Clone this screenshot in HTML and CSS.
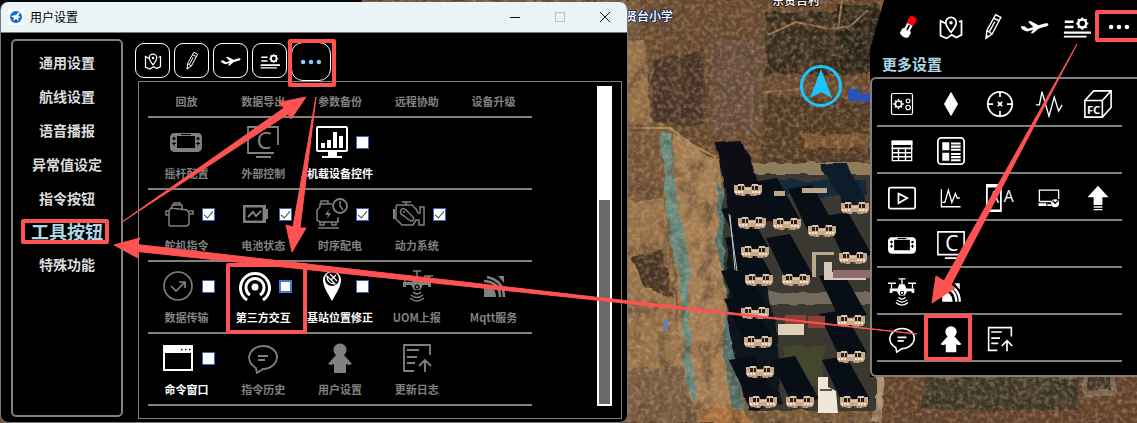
FILE: index.html
```html
<!DOCTYPE html>
<html lang="zh-CN">
<head>
    <meta charset="UTF-8">
    <meta name="viewport" content="width=device-width, initial-scale=1.0">
    <title>用户设置</title>
    <link rel="stylesheet" href="styles.css">
</head>
<body>

    <!-- Icon set -->
    <svg class="defs" aria-hidden="true">
        <symbol id="i-map" viewBox="0 0 32 32">
            <path d="M10 12L4 9v17l7 3 6-4 5 3 6-3V9l-3 1" fill="none" stroke="currentColor" stroke-width="2"/>
            <path d="M16 22c-4-5-6-8-6-11a6 6 0 0 1 12 0c0 3-2 6-6 11z" fill="none" stroke="currentColor" stroke-width="2"/>
            <circle cx="16" cy="11" r="2" fill="currentColor"/>
        </symbol>
        <symbol id="i-pencil" viewBox="0 0 32 32">
            <path d="M8 29l1-9L19 2l6 3-10 19zM9 20l6 4M17 6l6 3M18 10l-6 11" fill="none" stroke="currentColor" stroke-width="1.6"/>
            <path d="M8 29l1-4 2 1z" fill="currentColor"/>
        </symbol>
        <symbol id="i-plane" viewBox="0 0 32 32">
            <path d="M1 15l3 0 4 3 6-2-6-6 3-1 9 5 7-2c3-1 5 0 4 2-1 1-3 2-5 2l-6 2-6 5h-3l3-4-7 2c-3 0-7-3-8-6z" fill="currentColor"/>
        </symbol>
        <symbol id="i-list" viewBox="0 0 32 32">
            <path d="M2 10h10M2 16h10M1 22.500h31" fill="none" stroke="currentColor" stroke-width="2.600"/>
            <path d="M1 27h26" stroke="currentColor" stroke-width="2"/>
            <circle cx="22" cy="12" r="4.500" fill="none" stroke="currentColor" stroke-width="2.800"/>
            <path d="M22 5v3M22 16v3M15 12h3M26 12h3M17 7l2 2M27 17l-2-2M27 7l-2 2M17 17l2-2" stroke="currentColor" stroke-width="2"/>
        </symbol>
        <symbol id="i-dots" viewBox="0 0 32 32">
            <g fill="currentColor"><circle cx="7" cy="16" r="2.600"/><circle cx="16" cy="16" r="2.600"/><circle cx="25" cy="16" r="2.600"/></g>
        </symbol>
        <symbol id="i-console" viewBox="0 0 32 32">
            <path fill-rule="evenodd" d="M4 7h24c2 0 4 2 4 4v10c0 3-2 5-5 5H5c-3 0-5-2-5-5V11c0-2 2-4 4-4zm3 3v12h18V10z" fill="currentColor"/>
            <path d="M11 8.500h10M2 17.500h4M4 15.500v4M26 17.500h4M28 15.500v4" stroke="#000" stroke-width="1.200"/>
            <circle cx="4" cy="12.500" r="1.500"/><circle cx="28" cy="12.500" r="1.500"/>
        </symbol>
        <symbol id="i-screen" viewBox="0 0 32 32">
            <path d="M31 19V1H1v26h26M9 31h15" fill="none" stroke="currentColor" stroke-width="1.800"/>
            <text x="17" y="23" text-anchor="middle" class="thin" font-size="24" fill="currentColor">C</text>
        </symbol>
        <symbol id="i-monitor" viewBox="0 0 32 32">
            <rect x="1" y="1" width="30" height="24" rx="1" fill="none" stroke="currentColor" stroke-width="2"/>
            <path d="M5 22v-5h4v5zM11 22v-8h4v8zM17 22V6h4v16zM23 22V10h4v12zM12 26h9v4h5v2H6v-2h6z" fill="currentColor"/>
        </symbol>
        <symbol id="i-servo" viewBox="0 0 32 32">
            <path d="M7 27V13l2-3 16 2 2 3v11l-2 2H8zM7 13H4v4h3M27 13h4v3h-4M10 10V7h10v4M12 7V5h6v2" fill="none" stroke="currentColor" stroke-width="1.500"/>
        </symbol>
        <symbol id="i-battery" viewBox="0 0 32 32">
            <path fill-rule="evenodd" d="M4 7h23v4h2v10h-2v4H4zm2.500 2.500v13h17v-13z" fill="currentColor"/>
            <path d="M9 19l5-5 3 4 5-5" fill="none" stroke="currentColor" stroke-width="2"/>
        </symbol>
        <symbol id="i-generator" viewBox="0 0 32 32">
            <path d="M16 6H4v3L1 12v10l3 2h18v-5M5 6V3h7v3M4 24v3h4v-3M16 24v3h4v-3M2 30h21" fill="none" stroke="currentColor" stroke-width="1.500"/>
            <circle cx="24" cy="8" r="7" fill="none" stroke="currentColor" stroke-width="1.800"/>
            <path d="M24 3v5l3 4" fill="none" stroke="currentColor" stroke-width="1.500"/>
            <path d="M13 11l-4 6h3l-1 4 4-6h-3z" fill="currentColor"/>
        </symbol>
        <symbol id="i-engine" viewBox="0 0 32 32">
            <path d="M4 7h15l4 4 2 4h2V9h4v18h-5v-5h-3l-3 5H9l-6-6V9zM9 4h9M13 4v3" fill="none" stroke="currentColor" stroke-width="1.500"/>
            <path d="M1 11v10" stroke="currentColor" stroke-width="2"/>
            <path d="M8 12c2-3 4-1 6 1l6 6c2 2 0 4-2 4-3-1-4-3-7-5-2-1-5-3-3-6z" fill="none" stroke="currentColor" stroke-width="1.400"/>
            <circle cx="11" cy="14" r="1" fill="currentColor"/>
        </symbol>
        <symbol id="i-trend" viewBox="0 0 32 32">
            <circle cx="16" cy="16" r="14" fill="none" stroke="currentColor" stroke-width="1.600"/>
            <path d="M9 16l5 5 9-9M17 12h6v6" fill="none" stroke="currentColor" stroke-width="1.700"/>
        </symbol>
        <symbol id="i-cast" viewBox="0 0 32 32">
            <circle cx="16" cy="17" r="3.500" fill="currentColor"/>
            <path d="M8 30a14.500 14.500 0 1 1 16 0M11 25a9 9 0 1 1 10 0" fill="none" stroke="currentColor" stroke-width="3"/>
        </symbol>
        <symbol id="i-base" viewBox="0 0 32 32">
            <path d="M16 31C11 22 7 16 7 10a9 9 0 0 1 18 0c0 6-4 12-9 21z" fill="currentColor"/>
            <circle cx="16" cy="9" r="7"/>
            <path d="M11 6c0 6 4 8 8 8zM15 10l5-5M14 4l7 7" stroke="currentColor" stroke-width="1.200" fill="none"/>
        </symbol>
        <symbol id="i-drone" viewBox="0 0 32 32">
            <path d="M0 6h9M23 6h9M12 1h8M16 1v6M4 6v6M28 6v6" stroke="currentColor" stroke-width="1.500"/>
            <path d="M2 12h9l2-5h6l2 5h9v5h-3v-2h-5l-3 5h-6l-3-5H5v2H2z" fill="currentColor"/>
            <circle cx="16" cy="17" r="2.500"/><circle cx="16" cy="17" r="1.200" fill="currentColor"/>
            <path d="M12 22q4 4 8 0M10 25q6 5 12 0M9 28q7 6 14 0" fill="none" stroke="currentColor" stroke-width="1.400"/>
        </symbol>
        <symbol id="i-rss" viewBox="0 0 32 32">
            <path d="M6 15q12 1 12 12H6z" fill="currentColor"/>
            <path d="M6 11q16 1 16 16M9 7q17 4 17 20" fill="none" stroke="currentColor" stroke-width="2.600"/>
            <path d="M20 6h6v7z" fill="currentColor"/>
        </symbol>
        <symbol id="i-window" viewBox="0 0 32 32">
            <path fill-rule="evenodd" d="M1 3h30v26H1zm2 8v16h26V11z" fill="currentColor"/>
            <path d="M19 7.500h1.500M23 7.500h1.500M27 7.500h1.500" stroke="#000" stroke-width="1.500"/>
        </symbol>
        <symbol id="i-chat" viewBox="0 0 32 32">
            <path d="M9 26C4 23 2 19 2 15c1-6 6-11 14-11s14 5 14 11-6 12-14 12l-6 4z" fill="none" stroke="currentColor" stroke-width="1.800"/>
            <path d="M11 14h10M11 18h7" stroke="currentColor" stroke-width="2"/>
        </symbol>
        <symbol id="i-user" viewBox="0 0 32 32">
            <path d="M12 13a6.500 6.500 0 1 1 8 0l8 9-3 1-3-1v9H10v-9l-3 1-3-1z" fill="currentColor"/>
        </symbol>
        <symbol id="i-log" viewBox="0 0 32 32">
            <path d="M13 29H3V3h26v10" fill="none" stroke="currentColor" stroke-width="1.800"/>
            <path d="M6 8h12M6 15h10M6 21h8M24 30V19M18 24l6-6 6 6" fill="none" stroke="currentColor" stroke-width="1.900"/>
        </symbol>
        <symbol id="i-lamp" viewBox="0 0 32 32">
            <g transform="rotate(28 16 16)">
                <rect x="11" y="3" width="9" height="11" rx="3" fill="#f00"/>
                <path d="M12 13h7v6l2 2v6q-5 4-11 0v-6l2-2z" fill="#fff"/>
                <path d="M15.500 14v6" stroke="#000" stroke-width="2"/>
            </g>
        </symbol>
        <symbol id="i-panel" viewBox="0 0 32 32">
            <rect x="4" y="4" width="24" height="24" rx="2" fill="none" stroke="currentColor" stroke-width="1.400"/>
            <circle cx="12" cy="16" r="3.500" fill="none" stroke="currentColor" stroke-width="1.800"/>
            <path d="M12 10v2M12 20v2M6 16h2M16 16h2M8 12l1 1M16 12l-1 1M8 20l1-1M16 20l-1-1" stroke="currentColor" stroke-width="1.500"/>
            <circle cx="23" cy="12.500" r="2.200" fill="none" stroke="currentColor" stroke-width="1.300"/>
            <circle cx="23" cy="20" r="2.600" fill="none" stroke="currentColor" stroke-width="1.300"/>
        </symbol>
        <symbol id="i-diamond" viewBox="0 0 32 32"><path d="M16 2l8 14-8 14-8-14z" fill="currentColor"/></symbol>
        <symbol id="i-target" viewBox="0 0 32 32">
            <circle cx="16" cy="16" r="14" fill="none" stroke="currentColor" stroke-width="2"/>
            <path d="M16 2v6M16 24v6M2 16h6M24 16h6M13.500 13.500l5 5M18.500 13.500l-5 5" stroke="currentColor" stroke-width="2"/>
        </symbol>
        <symbol id="i-wave" viewBox="0 0 32 32"><path d="M1 17h4L8 2l8 28 6-22 5 16 4-7" fill="none" stroke="currentColor" stroke-width="1.500"/></symbol>
        <symbol id="i-fc" viewBox="0 0 32 32">
            <path d="M1 12h20v19H1zM1 12L11 1h20L21 12M31 1v19L21 31" fill="none" stroke="currentColor" stroke-width="1.800"/>
            <text x="11" y="27" text-anchor="middle" class="heavy" font-size="13" fill="currentColor">FC</text>
        </symbol>
        <symbol id="i-table" viewBox="0 0 32 32">
            <path d="M5 5h22v22H5zM5 18h22M12 12v15M20 12v15M5 22.500h22" fill="none" stroke="currentColor" stroke-width="1.600"/>
            <path d="M4 4h24v5H4zM4 12h24v2H4z" fill="currentColor"/>
        </symbol>
        <symbol id="i-grid" viewBox="0 0 32 32">
            <rect x="1" y="1" width="30" height="30" rx="4" fill="none" stroke="currentColor" stroke-width="2"/>
            <path d="M6 6h8v9H6zM6 18h8v9H6z" fill="currentColor"/>
            <path d="M16 7.500h11M16 11h11M16 14.500h11M16 19.500h11M16 23h11M16 26.500h11" stroke="currentColor" stroke-width="2.400"/>
        </symbol>
        <symbol id="i-play" viewBox="0 0 32 32">
            <rect x="1" y="4" width="30" height="24" rx="2" fill="none" stroke="currentColor" stroke-width="2"/>
            <path d="M12 11l10 5-10 6z" fill="none" stroke="currentColor" stroke-width="2"/>
        </symbol>
        <symbol id="i-graph" viewBox="0 0 32 32"><path d="M5 6v20h22M6 21h3l4-14 4 14 4-10 2 5h3" fill="none" stroke="currentColor" stroke-width="1.500"/></symbol>
        <symbol id="i-font" viewBox="0 0 32 32">
            <path fill-rule="evenodd" d="M0 0h18v32H0zm2 4v25h14V4z" fill="currentColor"/>
            <text x="9" y="22" text-anchor="middle" class="thin" font-size="18" fill="currentColor">A</text>
            <text x="26" y="20" text-anchor="middle" class="thin" font-size="18" fill="currentColor">A</text>
        </symbol>
        <symbol id="i-pc" viewBox="0 0 32 32">
            <path d="M5 20V7h22v10M5 20h14" fill="none" stroke="currentColor" stroke-width="1.500"/>
            <path d="M4 22h9v3H4zM14 23h5v2h-5z" fill="currentColor"/>
            <circle cx="23" cy="22" r="4.500" fill="currentColor"/>
            <path d="M20 19l3 3 3-3" fill="none" stroke="#000" stroke-width="1.500"/>
        </symbol>
        <symbol id="i-up" viewBox="0 0 32 32"><path d="M16 2l12 13h-7v9H11v-9H4zM11 25.500h10v1.500H11zM11 28.500h10V30H11z" fill="currentColor"/></symbol>
    </svg>

    <!-- Satellite map -->
    <svg class="map" viewBox="0 0 1137 423" preserveAspectRatio="xMinYMin slice" aria-hidden="true">
        <defs>
            <filter id="rough" x="0" y="0" width="100%" height="100%">
                <feTurbulence type="fractalNoise" baseFrequency="0.06" numOctaves="2" seed="4"/>
                <feDisplacementMap in="SourceGraphic" scale="8" xChannelSelector="R" yChannelSelector="G"/>
            </filter>
            <filter id="dark" x="0" y="0" width="100%" height="100%">
                <feTurbulence type="fractalNoise" baseFrequency="0.07 0.05" numOctaves="5" seed="8"/>
                <feColorMatrix values="0 0 0 0 .1  0 0 0 0 .06  0 0 0 0 .03  3.2 0 0 0 -1.5"/>
            </filter>
            <filter id="light" x="0" y="0" width="100%" height="100%">
                <feTurbulence type="fractalNoise" baseFrequency="0.22" numOctaves="4" seed="21"/>
                <feColorMatrix values="0 0 0 0 .72  0 0 0 0 .52  0 0 0 0 .34  0 2.200 0 0 -.9"/>
            </filter>
            <g id="shade"><path d="M-14 0L-34-42-10-46 14-3z" fill="#080e15"/></g>
            <g id="block">
                <path d="M-14-5h4v-1h6l1 3h6l1-3h6v1h4v7l-2 3h-3l-2 1h-4l-1-2h-4l-1 2h-4l-2-1h-3l-2-3z" fill="#c9a98b"/>
                <path d="M-10-4h3v4h-3zM-6-4h2v4h-2zM4-4h2v4H4zM7-4h3v4H7z" fill="#2a201b"/>
                <path d="M-13 2H-4M4 2h9" stroke="#f6e6d2" stroke-width="2" stroke-dasharray="2 1"/>
                <path d="M-10-5h6M4-5h6" stroke="#f2e2d0"/>
                <path d="M-3-1h6" stroke="#efe0cf"/>
                <path d="M-12 5h24" stroke="#86604a" stroke-dasharray="2 2"/>
            </g>
        </defs>
        <g filter="url(#rough)">
            <rect width="1137" height="423" fill="#775839"/>
            <path d="M640 0H880V165H720L670 128 645 120z" fill="#67482f"/>
            <path d="M620 42h25l6 80-31 6z" fill="#967046"/>
            <path d="M652 60l50-10 2 75-52-2z" fill="#473225"/>
            <path d="M712 38l52 4-4 88h-52z" fill="#684e3d"/>
            <path d="M765 12h105v62H766z" fill="#352a1d"/>
            <path d="M836 5l45 0-4 66-42-2z" fill="#282319"/>
            <path d="M764 96l106 4v64H762z" fill="#503823"/>
            <path d="M800 134h70v14h-66z" fill="#7a5533"/>
            <path d="M620 133h40l4 80-44 40z" fill="#785539"/>
            <path d="M672 133l48 30 12 260H680z" fill="#a47c51"/>
            <path d="M620 200l45 0 20 223h-65z" fill="#98724a"/>
            <path d="M630 256l32-6 10 50-26-12z" fill="#443023"/>
            <path d="M620 370l62-4 16 57h-78z" fill="#7a5b40"/>
            <path d="M661 133h9l9 76 10 44 2 100 6 50-11-14-6-110-12-50z" fill="#648a7f"/>
            <path d="M718 180l12 40 14 203h-10l-12-90 4-30-9-60z" fill="#4a706d"/>
            <path d="M700 408h38l15 15h-55z" fill="#a86e3a"/>
            <path d="M872 377h265v46H872z" fill="#644129"/>
            <path d="M925 378h154v32H920z" fill="#3b3526"/>
            <path d="M1083 378h32v18h-32z" fill="#786850"/>
            <path d="M1089 378h20v12h-20z" fill="#403127"/>
            <path d="M872 377h13l-4 45h-9z" fill="#a99271"/>
        </g>
        <path d="M620 128h50l24 18 22 11" fill="none" stroke="#b28a53" stroke-width="2"/>
        <path d="M766 92l58-5" stroke="#9d6140" stroke-width="2"/>
        <path d="M768 35l28-13 34 7 20-3 18-16M838 30l4-30" fill="none" stroke="#9c704d" stroke-width="2"/>
        <rect width="1137" height="423" filter="url(#dark)" opacity=".65"/>
        <rect width="1137" height="423" filter="url(#light)" opacity=".4"/>

        <!-- Housing estate -->
        <g filter="url(#rough)">
            <path d="M723 164h154v247H748l-20-80-4-60z" fill="#3a3931"/>
            <path d="M750 163h122v11H754z" fill="#8f7b5d"/>
            <path d="M765 292h106v13H768z" fill="#716b5d"/>
            <path d="M774 180h92v17h-92z" fill="#172c3b"/>
            <path d="M715 142l27-2 33 80-42 10z" fill="#0a1119"/>
            <path d="M820 164h27l20 41h-24z" fill="#0c1a29"/>
            <path d="M727 240l25-10 22 90 8 85-34 5-20-80z" fill="#0b141b"/>
            <path d="M782 346h42v40h-30z" fill="#42462f"/>
        </g>
        <use href="#shade" x="787" y="224"/><use href="#shade" x="822" y="231"/><use href="#shade" x="858" y="258"/>
        <use href="#shade" x="755" y="251"/><use href="#shade" x="759" y="280"/><use href="#shade" x="800" y="280"/>
        <use href="#shade" x="755" y="313"/><use href="#shade" x="853" y="318"/><use href="#shade" x="758" y="341"/>
        <use href="#shade" x="853" y="356"/><use href="#shade" x="763" y="402"/><use href="#shade" x="805" y="402"/><use href="#shade" x="856" y="402"/>
        <use href="#block" x="748" y="190"/><use href="#block" x="752" y="223"/><use href="#block" x="787" y="224"/>
        <use href="#block" x="822" y="231"/><use href="#block" x="855" y="208"/><use href="#block" x="755" y="252"/>
        <use href="#block" x="853" y="258"/><use href="#block" x="759" y="280"/><use href="#block" x="796" y="280"/>
        <use href="#block" x="755" y="313"/><use href="#block" x="851" y="321"/><use href="#block" x="758" y="342"/>
        <use href="#block" x="851" y="357"/><use href="#block" x="760" y="372"/><use href="#block" x="763" y="402"/>
        <use href="#block" x="800" y="402"/><use href="#block" x="854" y="402"/>
        <path d="M730 215l5 55M729 214l8 57" stroke="#b6c3c6" stroke-width="1"/>
        <path d="M774 191h11v5h-11zM802 188h25v5h-25zM812 252h22v3h-18v22h-4z" fill="#b9a88c"/>
        <path d="M824 262h8v10h34v8h-42z" fill="#d6c9ba"/>
        <path d="M833 270h37v8h-37z" fill="#8f6b6d"/>
        <path d="M785 315h21v9h-21zM808 316h17v12h-17z" fill="#8c4036"/>
        <path d="M778 324h26v11h-26z" fill="#ded0b8"/>
        <path d="M818 377h10v10l8 4 2 22h-20z" fill="#efe6d7"/>
        <path d="M820 390h12" stroke="#5c5148" stroke-width="2"/>
        <path d="M848 89h12v12h-12zM860 94h10v8h-10z" fill="#2a52b5"/>
        <path d="M664 319h4v12h-4z" fill="#5f83b8"/>
        <path d="M0 0h362v12H0z" fill="#0a0806"/>
        <g class="place">
            <text x="673" y="21" text-anchor="end" stroke="#24365f">贤台小学</text>
            <text x="796" y="5" text-anchor="middle" stroke="#2b2018">东贤台村</text>
        </g>
        <circle cx="821" cy="86" r="19.500" fill="none" stroke="#1ac6ff" stroke-width="3"/>
        <path d="M821 69l11 29-11-6-11 6z" fill="#1ac6ff"/>
    </svg>

    <main class="desktop">
        <section class="dialog">
            <header class="titlebar">
                <svg class="logo" viewBox="0 0 16 16" aria-hidden="true">
                    <rect width="16" height="16" fill="#fff"/>
                    <circle cx="8" cy="8" r="6" fill="#1268e0"/>
                    <path d="M3 7l5-1 3-3 1 1-2 3 3 1-3 1 1 3-3-2-3 2 1-3z" fill="#fff"/>
                </svg>
                <h1>用户设置</h1>
                <button class="win-btn" aria-label="最小化"><svg viewBox="0 0 12 12"><path d="M1 6.500h10"/></svg></button>
                <button class="win-btn" aria-label="最大化" disabled><svg viewBox="0 0 12 12"><rect x="1.500" y="1.500" width="9" height="9"/></svg></button>
                <button class="win-btn" aria-label="关闭"><svg viewBox="0 0 12 12"><path d="M1 1l10 10M11 1L1 11"/></svg></button>
            </header>

            <div class="dialog-body">
                <nav class="sidebar">
                    <a href="#">通用设置</a>
                    <a href="#">航线设置</a>
                    <a href="#">语音播报</a>
                    <a href="#">异常值设定</a>
                    <a href="#">指令按钮</a>
                    <a href="#" class="active">工具按钮</a>
                    <a href="#">特殊功能</a>
                </nav>

                <div class="content">
                    <div class="tabs">
                        <button aria-label="地图"><svg><use href="#i-map"/></svg></button>
                        <button aria-label="编辑"><svg><use href="#i-pencil"/></svg></button>
                        <button aria-label="飞行"><svg><use href="#i-plane"/></svg></button>
                        <button aria-label="任务"><svg><use href="#i-list"/></svg></button>
                        <button class="active" aria-label="更多"><svg><use href="#i-dots"/></svg></button>
                    </div>

                    <div class="tab-page">
                        <div class="tool-list">
                            <div class="tool-row short">
                                <div class="tool"><span>回放</span></div>
                                <div class="tool"><span>数据导出</span></div>
                                <div class="tool"><span>参数备份</span></div>
                                <div class="tool"><span>远程协助</span></div>
                                <div class="tool"><span>设备升级</span></div>
                            </div>
                            <div class="tool-row">
                                <div class="tool"><svg><use href="#i-console"/></svg><span>摇杆配置</span></div>
                                <div class="tool"><svg><use href="#i-screen"/></svg><span>外部控制</span></div>
                                <label class="tool on"><svg><use href="#i-monitor"/></svg><input type="checkbox"><span>机载设备控件</span></label>
                            </div>
                            <div class="tool-row">
                                <label class="tool"><svg><use href="#i-servo"/></svg><input type="checkbox" checked><span>舵机指令</span></label>
                                <label class="tool"><svg><use href="#i-battery"/></svg><input type="checkbox" checked><span>电池状态</span></label>
                                <label class="tool"><svg><use href="#i-generator"/></svg><input type="checkbox" checked><span>时序配电</span></label>
                                <label class="tool"><svg><use href="#i-engine"/></svg><input type="checkbox" checked><span>动力系统</span></label>
                            </div>
                            <div class="tool-row">
                                <label class="tool"><svg><use href="#i-trend"/></svg><input type="checkbox"><span>数据传输</span></label>
                                <label class="tool on"><svg><use href="#i-cast"/></svg><input type="checkbox" class="hot"><span>第三方交互</span></label>
                                <label class="tool on"><svg><use href="#i-base"/></svg><input type="checkbox"><span>基站位置修正</span></label>
                                <div class="tool"><svg><use href="#i-drone"/></svg><span>UOM上报</span></div>
                                <div class="tool"><svg><use href="#i-rss"/></svg><span>Mqtt服务</span></div>
                            </div>
                            <div class="tool-row">
                                <label class="tool on"><svg><use href="#i-window"/></svg><input type="checkbox"><span>命令窗口</span></label>
                                <div class="tool"><svg><use href="#i-chat"/></svg><span>指令历史</span></div>
                                <div class="tool"><svg><use href="#i-user"/></svg><span>用户设置</span></div>
                                <div class="tool"><svg><use href="#i-log"/></svg><span>更新日志</span></div>
                            </div>
                        </div>
                        <div class="scrollbar"><div class="thumb"></div></div>
                    </div>
                </div>
            </div>
        </section>

        <aside class="panel">
            <div class="panel-bar">
                <button aria-label="指示灯"><svg><use href="#i-lamp"/></svg></button>
                <button aria-label="地图"><svg><use href="#i-map"/></svg></button>
                <button aria-label="编辑"><svg><use href="#i-pencil"/></svg></button>
                <button aria-label="飞行"><svg><use href="#i-plane"/></svg></button>
                <button aria-label="任务"><svg><use href="#i-list"/></svg></button>
                <button aria-label="更多"><svg><use href="#i-dots"/></svg></button>
            </div>
            <h2>更多设置</h2>
            <div class="panel-box">
                <div class="panel-row">
                    <button aria-label="参数"><svg><use href="#i-panel"/></svg></button>
                    <button aria-label="标定"><svg><use href="#i-diamond"/></svg></button>
                    <button aria-label="罗盘"><svg><use href="#i-target"/></svg></button>
                    <button aria-label="振动"><svg><use href="#i-wave"/></svg></button>
                    <button aria-label="飞控"><svg><use href="#i-fc"/></svg></button>
                </div>
                <div class="panel-row">
                    <button aria-label="表格"><svg><use href="#i-table"/></svg></button>
                    <button aria-label="列表"><svg><use href="#i-grid"/></svg></button>
                </div>
                <div class="panel-row">
                    <button aria-label="回放"><svg><use href="#i-play"/></svg></button>
                    <button aria-label="数据导出"><svg><use href="#i-graph"/></svg></button>
                    <button aria-label="参数备份"><svg><use href="#i-font"/></svg></button>
                    <button aria-label="远程协助"><svg><use href="#i-pc"/></svg></button>
                    <button aria-label="设备升级"><svg><use href="#i-up"/></svg></button>
                </div>
                <div class="panel-row">
                    <button aria-label="摇杆配置"><svg><use href="#i-console"/></svg></button>
                    <button aria-label="外部控制"><svg><use href="#i-screen"/></svg></button>
                </div>
                <div class="panel-row">
                    <button aria-label="UOM上报"><svg><use href="#i-drone"/></svg></button>
                    <button aria-label="Mqtt服务"><svg><use href="#i-rss"/></svg></button>
                </div>
                <div class="panel-row">
                    <button aria-label="指令历史"><svg><use href="#i-chat"/></svg></button>
                    <button aria-label="用户设置"><svg><use href="#i-user"/></svg></button>
                    <button aria-label="更新日志"><svg><use href="#i-log"/></svg></button>
                </div>
            </div>
        </aside>
    </main>

    <!-- Guide marks -->
    <svg class="marks" width="1137" height="423" viewBox="0 0 1137 423" aria-hidden="true">
        <g fill="none" stroke="#ff5252" stroke-width="4" stroke-linejoin="round">
            <rect x="290" y="41" width="44" height="44"/>
            <rect x="23" y="221" width="84" height="21"/>
            <rect x="228" y="265" width="77" height="67"/>
            <rect x="1097" y="12" width="45" height="28"/>
            <rect x="926" y="316" width="44" height="43"/>
        </g>
        <g fill="#ff5252" stroke="#ff5252" stroke-width="1">
            <path d="M122 222L284 108 279 102.500 306 97 291 119 288 114z"/>
            <path d="M316 97L293 227 286 225 292 252 306 228 300 228z"/>
            <path d="M917 334L137 244.500 140 238 114 245 138 258 137 251.500z"/>
            <path d="M1077 44L944 281 936 276 932 303 955 288 951 285z"/>
        </g>
    </svg>

</body>
</html>
```
FILE: styles.css
```css
* {
    box-sizing: border-box;
}

body {
    margin: 0;
    min-height: 100vh;
    position: relative;
    overflow: hidden;
    background-color: #5c4028;
    font-family: "Noto Sans CJK SC", sans-serif;
}

.defs {
    display: none;
}

.thin {
    font-family: "Open Sans", sans-serif;
    font-weight: normal;
}

.heavy {
    font-family: "Open Sans", sans-serif;
    font-weight: bold;
}

/* map under the windows */
.map {
    position: absolute;
    top: 0;
    left: 0;
    width: 100%;
    height: 100%;
}

.place text {
    font-size: 12px;
    font-weight: 500;
    fill: #fff;
    stroke-width: 2px;
    paint-order: stroke;
}

.desktop {
    position: relative;
    display: flex;
    justify-content: space-between;
    align-items: flex-start;
}

button {
    padding: 0;
    border: none;
    background: none;
    color: #fff;
    display: flex;
    align-items: center;
    justify-content: center;
    cursor: pointer;
}

/* settings dialog */
.dialog {
    flex: 0 0 628px;
    margin-top: 2px;
    border: 1px solid #777;
    border-top: none;
    border-radius: 8px;
    background-color: #000;
    overflow: hidden;
}

.titlebar {
    display: flex;
    align-items: center;
    height: 31px;
    padding-left: 7px;
    background-color: #eaf4f7;
    border-bottom: 1px solid #777;
}

.logo {
    width: 16px;
    height: 16px;
}

.titlebar h1 {
    flex: 1;
    margin: 0 0 0 6px;
    font-size: 12px;
    font-weight: normal;
    line-height: 16px;
    color: #000;
}

.win-btn {
    width: 45px;
    height: 28px;
}

.win-btn svg {
    width: 12px;
    height: 12px;
    fill: none;
    stroke: #111;
}

.win-btn:disabled svg {
    stroke: #b8c2c4;
}

.dialog-body {
    display: flex;
    gap: 12px;
    padding: 6px 5px 3px 10px;
}

.sidebar {
    width: 112px;
    margin-bottom: 2px;
    padding-top: 4px;
    border: 2px solid #808080;
    border-radius: 5px;
    text-align: center;
}

.sidebar a {
    display: block;
    font-size: 14px;
    font-weight: bold;
    line-height: 34px;
    color: #dcdcdc;
    text-decoration: none;
}

.sidebar a.active {
    font-size: 18px;
    line-height: 32px;
    color: #add8e6;
}

.content {
    flex: 1;
}

.tabs {
    display: flex;
    align-items: flex-start;
    gap: 4px;
    height: 42px;
    padding-top: 3px;
}

.tabs button {
    width: 35px;
    height: 35px;
    margin-top: 1px;
    border: 1px solid #fff;
    border-radius: 9px;
}

.tabs svg {
    width: 20px;
    height: 20px;
}

.tabs button.active {
    width: 40px;
    height: 39px;
    margin-top: 0;
    border-radius: 12px;
    color: #8cc8f5;
}

.tab-page {
    display: flex;
    justify-content: space-between;
    margin-left: 3px;
    padding: 4px 9px 12px;
    border: 1px solid #808080;
}

.tool-list {
    width: 384px;
}

.tool-row {
    display: grid;
    grid-template-columns: repeat(5, 1fr);
    height: 72px;
    padding-top: 8px;
    border-bottom: 2px solid #808080;
}

.tool-row.short {
    height: 32px;
    padding-top: 7px;
}

.tool {
    display: grid;
    grid-template-columns: 1fr 32px 1fr;
    align-content: start;
    align-items: center;
    row-gap: 7px;
    color: #808080;
}

.tool.on {
    color: #fff;
}

.tool svg {
    grid-column: 2;
    width: 32px;
    height: 32px;
}

/* make room for the checkbox */
label.tool svg {
    margin-left: -8px;
}

.tool span {
    grid-column: 1 / -1;
    justify-self: center;
    font-size: 11px;
    font-weight: bold;
    line-height: 16px;
    white-space: nowrap;
}

.tool input {
    appearance: none;
    position: relative;
    width: 13px;
    height: 13px;
    margin: 0;
    border: 1px solid #3f5fbf;
    background-color: #fff;
}

.tool input.hot {
    border: 2px solid #4a74e0;
}

.tool input:checked::after {
    content: "";
    position: absolute;
    left: 3px;
    top: 0;
    width: 4px;
    height: 8px;
    border: solid #444;
    border-width: 0 1px 1px 0;
    transform: rotate(40deg);
}

.scrollbar {
    width: 15px;
    padding: 114px 2px 2px;
    background-color: #fff;
}

.thumb {
    height: 100%;
    background-color: #696969;
}

/* panel on the right */
.panel {
    flex: 0 0 267px;
    overflow: hidden;
    background-color: #000;
    clip-path: polygon(14px 0, 100% 0, 100% 100%, 0 100%, 0 50px);
}

.panel-bar {
    display: flex;
    height: 54px;
    padding-left: 18px;
}

.panel-bar button {
    flex: 0 0 42px;
}

.panel-bar svg,
.panel-row svg {
    width: 28px;
    height: 28px;
}

.tabs button.active svg {
    width: 28px;
    height: 28px;
}

.panel h2 {
    margin: 0 0 3px 12px;
    font-size: 15px;
    line-height: 20px;
    color: #add8e6;
}

.panel-box {
    padding: 1px 15px 13px 5px;
    border: 2px solid #808080;
    border-right: none;
    border-radius: 6px 0 0 6px;
}

.panel-row {
    display: grid;
    grid-template-columns: repeat(5, 1fr);
    height: 47px;
    padding-top: 2px;
    border-bottom: 2px solid #808080;
}

/* arrows and frames over everything */
.marks {
    position: absolute;
    top: 0;
    left: 0;
    pointer-events: none;
}
```
